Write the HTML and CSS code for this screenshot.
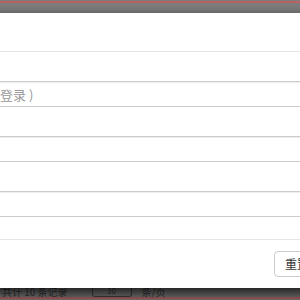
FILE: index.html
```html
<!DOCTYPE html>
<html lang="zh-CN">
<head>
<meta charset="utf-8">
<title>登录</title>
<link rel="stylesheet" href="styles.css">
</head>
<body>
<div class="screen">
  <div class="top-strip"></div>
  <div class="modal">
    <div class="modal-header"></div>
    <div class="modal-body">
      <input class="field" type="text" placeholder="（请输入您的手机号码或邮箱地址，用于登录 )">
      <input class="field" type="text">
      <input class="field" type="password">
    </div>
    <div class="modal-footer">
      <button class="btn" type="button">重置</button>
    </div>
  </div>
  <div class="bottom-strip">
    <span class="under-text">共计 10 条记录</span>
    <span class="under-box">10</span>
    <span class="under-text">条/页</span>
  </div>
</div>
</body>
</html>
```
FILE: styles.css
```css
html, body {
  margin: 0;
  padding: 0;
  width: 300px;
  height: 300px;
  overflow: hidden;
  background: #7f7f7f;
  font-family: "Noto Sans CJK SC", "Noto Sans", sans-serif;
}
.screen {
  width: 300px;
  height: 300px;
  overflow: hidden;
  display: flex;
  flex-direction: column;
}
.top-strip {
  height: 13px;
  flex: none;
  background: linear-gradient(#7f7f7f 0 1px, #b86363 1px 3px, #7f7f7f 3px);
}
.modal {
  position: relative;
  z-index: 1;
  flex: none;
  width: 593px;
  margin-left: -258px;
  background: #fff;
  box-shadow: 0 6px 14px rgba(0, 0, 0, 0.85);
}
.modal-header {
  height: 38px;
  border-bottom: 1px solid #e5e5e5;
}
.modal-body {
  padding: 29px 15px 22px;
  display: flex;
  flex-direction: column;
  gap: 29px;
}
.field {
  display: block;
  box-sizing: border-box;
  width: 100%;
  height: 26px;
  margin: 0;
  padding: 0 8px;
  border: 1px solid #ccc;
  border-radius: 0;
  box-shadow: inset 0 1px 1px rgba(0, 0, 0, 0.075);
  font-family: "Noto Sans CJK SC", "Noto Sans", sans-serif;
  font-size: 13px;
  color: #555;
  background: #fff;
  outline: none;
}
.field::placeholder {
  color: #999;
}
.modal-footer {
  border-top: 1px solid #e5e5e5;
  padding: 11px 15px 11px;
  display: flex;
  justify-content: flex-end;
}
.btn {
  box-sizing: border-box;
  height: 26px;
  padding: 0 10px;
  border: 1px solid #ccc;
  border-radius: 4px;
  background: #fff;
  color: #333;
  font-family: "Noto Sans CJK SC", "Noto Sans", sans-serif;
  font-size: 12px;
  line-height: 24px;
}
.bottom-strip {
  flex: 1;
  display: flex;
  align-items: flex-start;
  gap: 10px;
  padding: 0 0 0 2px;
  background: linear-gradient(#7f7f7f 0 9px, #b86363 9px 11px, #7f7f7f 11px);
  font-size: 10px;
  line-height: 8px;
  color: #3a3a3a;
}
.under-text {
  white-space: nowrap;
}
.under-box {
  box-sizing: border-box;
  width: 40px;
  height: 9px;
  border: 1px solid #444;
  border-top: none;
  border-radius: 0 0 3px 3px;
  margin-left: 14px;
  text-align: center;
  font-size: 8px;
  line-height: 6px;
}
```
